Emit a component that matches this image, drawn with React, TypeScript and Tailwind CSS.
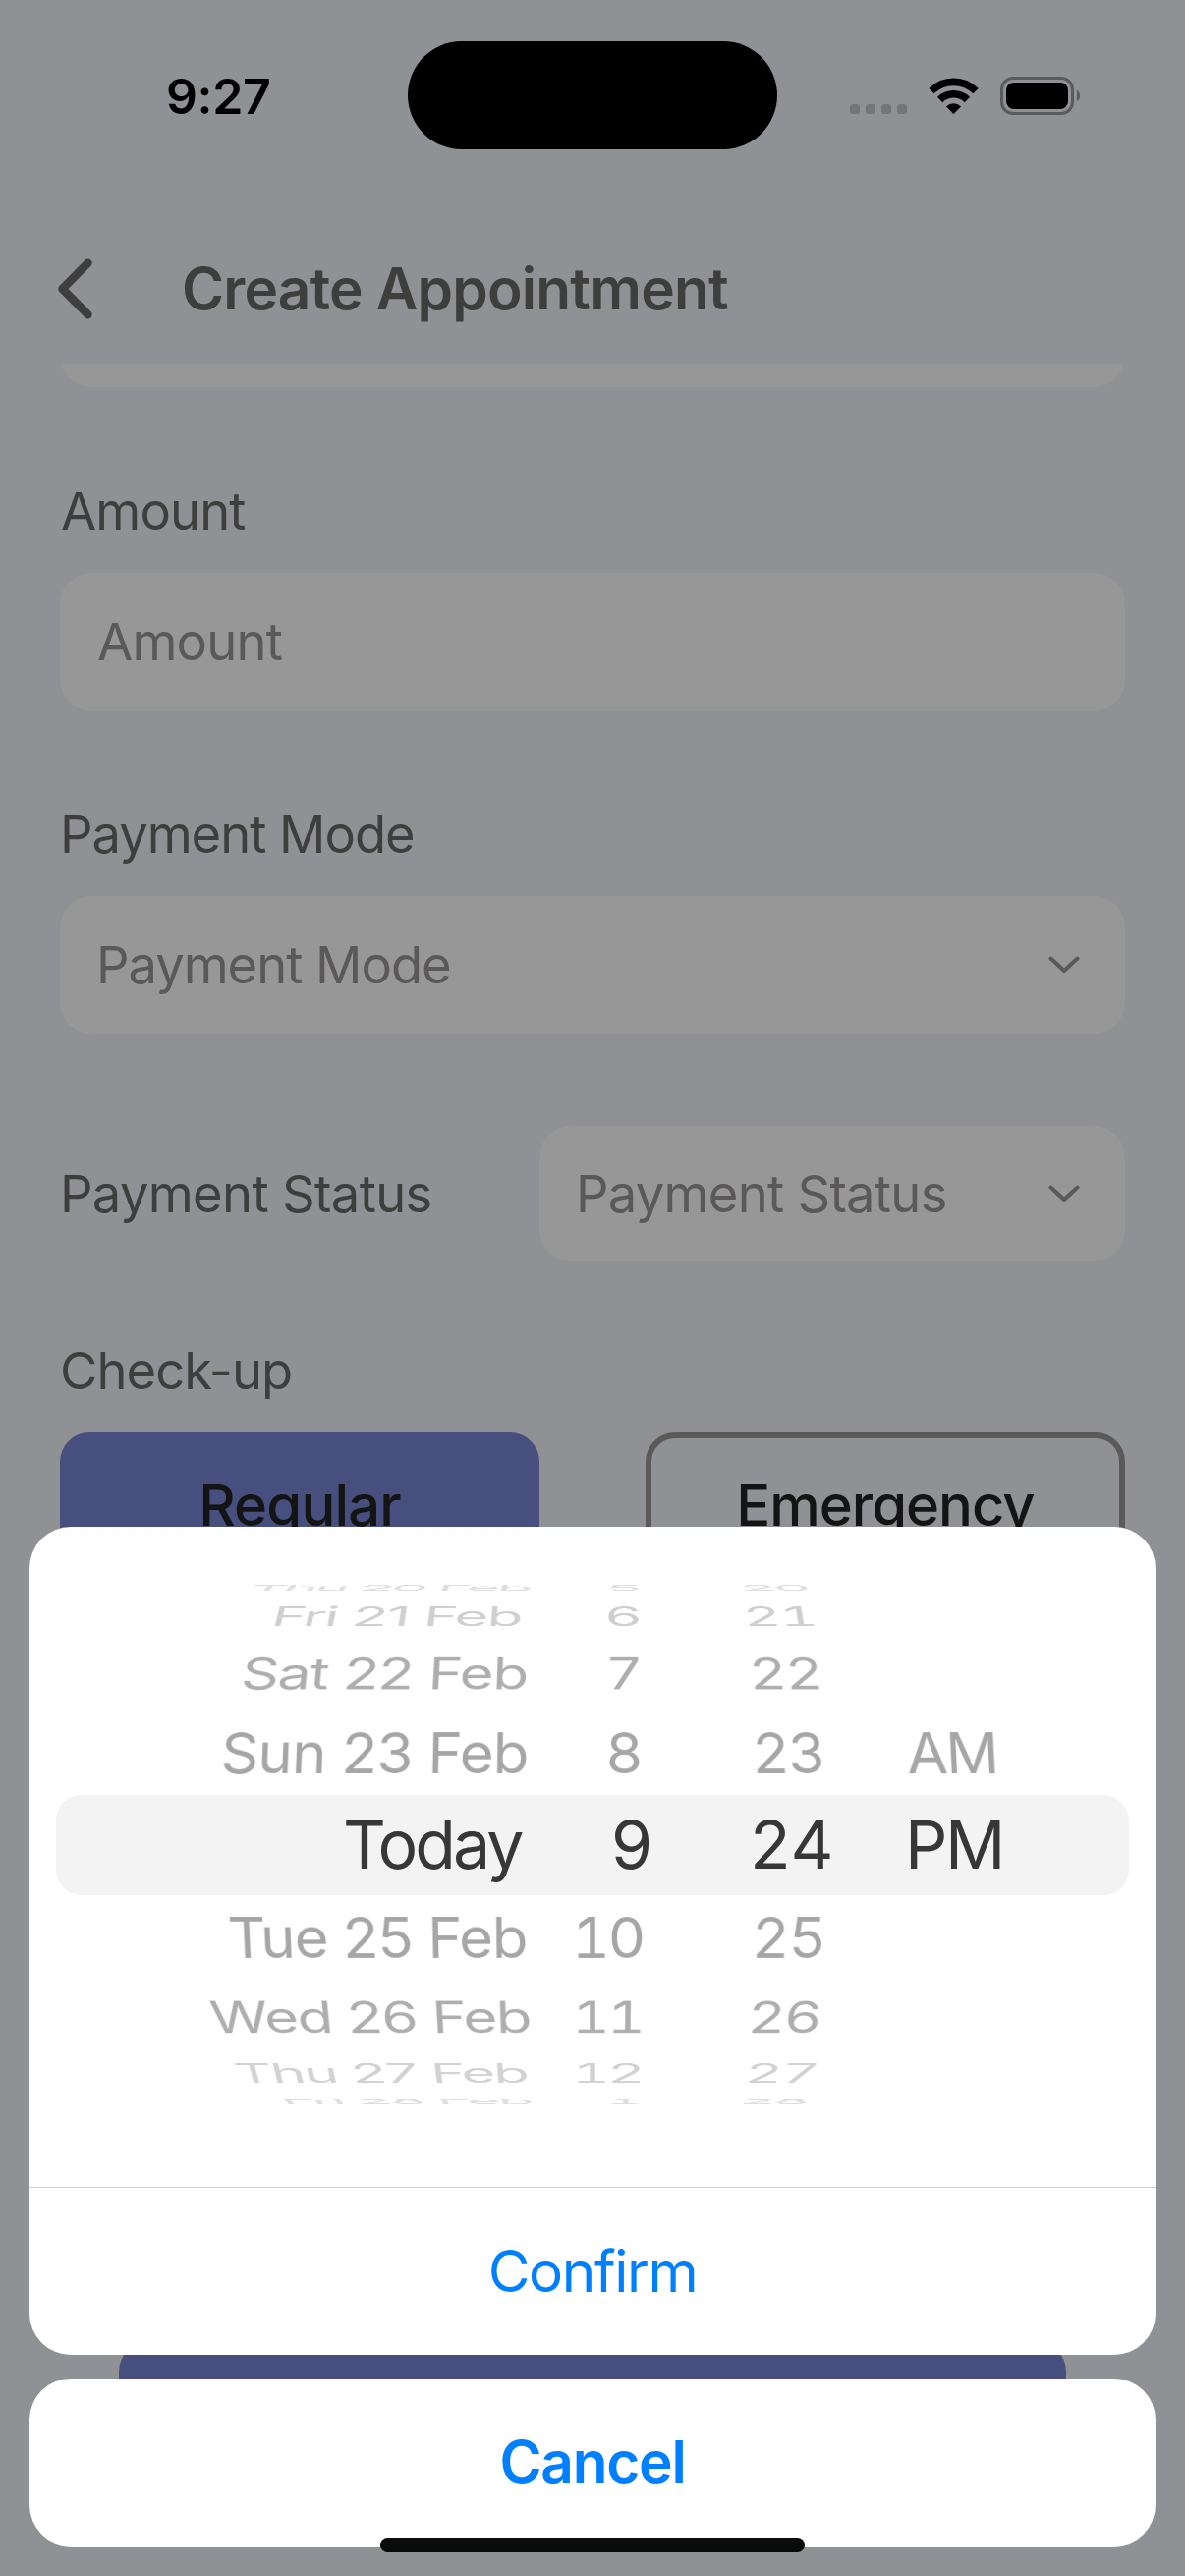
import React from "react";

type Cell = { text: string; cls: string };
type WheelRow = { row: string; date: Cell; hour: Cell; minute: Cell; period?: Cell };

const rowsAbove: WheelRow[] = [
  {
    row: "h-[18px] text-[60px] text-[#dedede] [transform:perspective(2480px)_rotateX(82deg)]",
    date: { text: "Thu 20 Feb", cls: "pl-[224px] tracking-[-3.77px]" },
    hour: { text: "5", cls: "pl-[56px]" },
    minute: { text: "20", cls: "pl-[12px] tracking-[-4.5px]" },
  },
  {
    row: "h-[40px] text-[60px] text-[#cfcfcf] [transform:perspective(2480px)_rotateX(62.6deg)]",
    date: { text: "Fri 21 Feb", cls: "pl-[247px] tracking-[-1.75px]" },
    hour: { text: "6", cls: "pl-[55px]" },
    minute: { text: "21", cls: "pl-[16px] tracking-[-2px]" },
  },
  {
    row: "h-[76px] text-[60px] text-[#aeaeae] [transform:perspective(2480px)_rotateX(42deg)]",
    date: { text: "Sat 22 Feb", cls: "pl-[216px] tracking-[-1.25px]" },
    hour: { text: "7", cls: "pl-[56px]" },
    minute: { text: "22", cls: "pl-[22px] tracking-[-2px]" },
  },
  {
    row: "h-[86px] text-[60px] text-[#a6a6a6] [transform:perspective(2480px)_rotateX(18deg)]",
    date: { text: "Sun 23 Feb", cls: "pl-[195px] tracking-[-0.9px]" },
    hour: { text: "8", cls: "pl-[56px]" },
    minute: { text: "23", cls: "pl-[25px] tracking-[-2px]" },
    period: { text: "AM", cls: "pl-[23px] tracking-[-1.8px]" },
  },
];

const selected: WheelRow = {
  row: "h-[100px] text-[68px] text-[#373737]",
  date: { text: "Today", cls: "pl-[319px] tracking-[-3px]" },
  hour: { text: "9", cls: "pl-[61px]" },
  minute: { text: "24", cls: "pl-[22px] tracking-[-1.5px]" },
  period: { text: "PM", cls: "pl-[21px] tracking-[-2.4px]" },
};

const rowsBelow: WheelRow[] = [
  {
    row: "h-[86px] text-[60px] text-[#a6a6a6] [transform:perspective(2480px)_rotateX(-18deg)]",
    date: { text: "Tue 25 Feb", cls: "pl-[202px] tracking-[-1.2px]" },
    hour: { text: "10", cls: "pl-[22px] tracking-[-2.5px]" },
    minute: { text: "25", cls: "pl-[25px] tracking-[-1.5px]" },
  },
  {
    row: "h-[76px] text-[60px] text-[#aeaeae] [transform:perspective(2480px)_rotateX(-42deg)]",
    date: { text: "Wed 26 Feb", cls: "pl-[184px] tracking-[-1.4px]" },
    hour: { text: "11", cls: "pl-[22px] tracking-[-3px]" },
    minute: { text: "26", cls: "pl-[21px] tracking-[-2px]" },
  },
  {
    row: "h-[38px] text-[60px] text-[#d2d2d2] [transform:perspective(2480px)_rotateX(-62.6deg)]",
    date: { text: "Thu 27 Feb", cls: "pl-[209px] tracking-[-2.11px]" },
    hour: { text: "12", cls: "pl-[22px] tracking-[-3px]" },
    minute: { text: "27", cls: "pl-[18px] tracking-[-2px]" },
  },
  {
    row: "h-[20px] text-[60px] text-[#dedede] [transform:perspective(2480px)_rotateX(-82deg)]",
    date: { text: "Fri 28 Feb", cls: "pl-[256px] tracking-[-2.95px]" },
    hour: { text: "1", cls: "pl-[56px]" },
    minute: { text: "28", cls: "pl-[12px] tracking-[-4.5px]" },
  },
];

function PickerRow({ item }: { item: WheelRow }) {
  return (
    <div
      className={`grid grid-cols-[530px_180px_160px_276px] grid-rows-[100%] items-center leading-none whitespace-pre ${item.row}`}
    >
      <span className={item.date.cls}>{item.date.text}</span>
      <span className={`tabular-nums ${item.hour.cls}`}>{item.hour.text}</span>
      <span className={`tabular-nums ${item.minute.cls}`}>{item.minute.text}</span>
      {item.period && <span className={item.period.cls}>{item.period.text}</span>}
    </div>
  );
}

function ChevronDown() {
  return (
    <svg className="h-[20px] w-[32px]" viewBox="0 0 32 20" fill="none" stroke="#5a5858" strokeWidth="4" strokeLinecap="round" strokeLinejoin="round">
      <path d="M2.5 3.5 L16 16 L29.5 3.5" />
    </svg>
  );
}

function StatusBar() {
  return (
    <div className="flex h-[196px] items-center pl-[169px]">
      <div className="w-[246px] text-[50px] leading-none font-semibold tracking-[-0.36px] text-black">9:27</div>
      <div className="-mt-[2px] h-[110px] w-[376px] rounded-[56px] bg-black" />
      <div className="mt-[26px] ml-[74px] flex gap-[6px]">
        {[0, 1, 2, 3].map((n) => (
          <span key={n} className="size-[10px] rounded-[3px] bg-[#747577]" />
        ))}
      </div>
      <svg className="-mt-px ml-[22px] h-[37px] w-[51px]" viewBox="0 0 51 37">
        <g fill="none" stroke="#000" strokeWidth="7.6">
          <path d="M3 13.6 A32 32 0 0 1 48 13.6" />
          <path d="M11.6 22.4 A20 20 0 0 1 39.4 22.4" />
        </g>
        <path d="M25.5 37 L18 29.4 A10.8 10.8 0 0 1 33 29.4 Z" fill="#000" />
      </svg>
      <svg className="-mt-px ml-[22px] h-[39px] w-[83px]" viewBox="0 0 83 39">
        <rect x="1.5" y="1.5" width="72" height="36" rx="11.5" fill="none" stroke="#5a5b5d" strokeWidth="3" />
        <rect x="6" y="6" width="63" height="27" rx="8" fill="#000" />
        <path d="M78 13.5 A7.5 7.5 0 0 1 78 25.5 Z" fill="#5a5b5d" />
      </svg>
    </div>
  );
}

export default function App() {
  return (
    <div className="relative h-[2622px] w-[1206px] overflow-hidden bg-[#909195] font-['Inter',sans-serif] text-[52.5px] text-[#3e3e3d]">
      <StatusBar />

      <header className="flex h-[174px] items-center pt-[22px] pl-[58px]">
        <svg className="h-[62px] w-[38px]" viewBox="0 0 38 62" fill="none" stroke="#3e3e3d" strokeWidth="8.5" strokeLinecap="round" strokeLinejoin="round">
          <path d="M31.5 4.8 L5.5 31 L31.5 57.2" />
        </svg>
        <h1 className="ml-[89px] text-[58.5px] leading-none font-semibold tracking-[-0.78px]">Create Appointment</h1>
      </header>

      <main className="px-[61px]">
        <div className="flex h-[24px] items-end overflow-hidden">
          <div className="h-[140px] w-full shrink-0 rounded-[32px] bg-[#979797]" />
        </div>

        <label className="mt-[96px] block pl-px leading-[60px] tracking-[-0.9px]">Amount</label>
        <div className="mt-[33px] flex h-[141px] items-center rounded-[32px] bg-[#979797] pl-[38px] leading-none tracking-[-0.8px] text-[#5a5858]">
          Amount
        </div>

        <label className="mt-[95px] block leading-[60px] tracking-[-1.03px]">Payment Mode</label>
        <div className="mt-[33px] flex h-[140px] items-center justify-between rounded-[32px] bg-[#979797] pr-[46px] pl-[37px] leading-none tracking-[-1.03px] text-[#5a5858]">
          Payment Mode
          <ChevronDown />
        </div>

        <div className="mt-[94px] flex h-[138px] items-center justify-between">
          <span className="leading-none tracking-[-0.66px]">Payment Status</span>
          <div className="flex h-full w-[596px] items-center justify-between rounded-[32px] bg-[#979797] pr-[46px] pl-[37px] leading-none tracking-[-0.73px] text-[#5a5858]">
            Payment Status
            <ChevronDown />
          </div>
        </div>

        <label className="mt-[81px] block leading-[60px] tracking-[-0.94px]">Check-up</label>
        <div className="mt-[33px] flex justify-between text-[58px] leading-none font-medium text-[#141414]">
          <div className="flex h-[147px] w-[488px] items-center justify-center rounded-[30px] bg-[#464f7d] tracking-[-0.87px]">
            Regular
          </div>
          <div className="flex h-[147px] w-[488px] items-center justify-center rounded-[30px] border-[6px] border-[#5b5959] tracking-[-1.02px]">
            Emergency
          </div>
        </div>

        <div className="mx-[60px] mt-[779px] h-[147px] rounded-[30px] bg-[#464f7d]" />
      </main>

      {/* Action sheet over the dimmed form */}
      <div className="absolute inset-x-[30px] bottom-[30px] flex flex-col gap-[24px] text-[58.5px] leading-none text-[#007fff]">
        <section className="rounded-[42px] bg-white">
          <div className="h-[672px] pt-[53px]">
            {rowsAbove.map((r) => (
              <PickerRow key={r.date.text} item={r} />
            ))}
            <div className="mx-[27px] h-[102px] rounded-[26px] bg-[#f3f3f3]">
              <div className="-ml-[27px] w-[1146px]">
                <PickerRow item={selected} />
              </div>
            </div>
            {rowsBelow.map((r) => (
              <PickerRow key={r.date.text} item={r} />
            ))}
          </div>
          <div className="flex h-[171px] items-center justify-center border-t border-[#d0d0d2] tracking-[-1.4px]">Confirm</div>
        </section>
        <section className="flex h-[171px] items-center justify-center rounded-[42px] bg-white font-semibold tracking-[-1.23px]">
          Cancel
        </section>
      </div>

      <div className="absolute bottom-[24px] left-[387px] h-[15px] w-[432px] rounded-full bg-[#0b0b0b]" />
    </div>
  );
}
